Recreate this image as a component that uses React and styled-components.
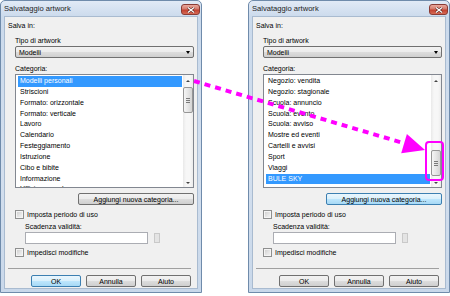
import React from "react";
import styled, { createGlobalStyle, css } from "styled-components";

const GlobalStyle = createGlobalStyle`
  * { box-sizing: border-box; }
  body {
    margin: 0;
    background: #fff;
    font-family: "Liberation Sans", Arial, sans-serif;
    font-size: 7px;
    color: #000;
  }
`;

const Page = styled.div`
  position: relative;
  display: flex;
  gap: 46px;
  width: 450px;
  height: 296px;
  overflow: hidden;
`;

const Window = styled.div`
  display: flex;
  flex-direction: column;
  width: 202px;
  height: 293px;
  padding: 0 3px 3px;
  border: 1px solid #6f8bab;
  border-radius: 5px 5px 0 0;
  background: linear-gradient(#e1eaf6, #cbdaec 16px, #d3dfee 60%, #c9d8ea);
`;

const TitleBar = styled.div`
  display: flex;
  align-items: center;
  justify-content: space-between;
  height: 15px;
  margin-right: -2px;
  font-size: 7.6px;
  color: #1e1e1e;
`;

const CloseButton = styled.div`
  display: flex;
  align-items: center;
  justify-content: center;
  width: 19px;
  height: 11px;
  margin-top: 2px;
  border: 1px solid #8a3b34;
  border-radius: 3px;
  background: linear-gradient(#e9a99d, #d47a6c 45%, #c2402f 55%, #d66a55);
`;

const Client = styled.div`
  display: flex;
  flex-direction: column;
  flex: 1;
  padding: 3px 3px 0;
  border: 1px solid #a9bbd0;
  background: #f0f0f0;
`;

const Label = styled.div`
  height: 11px;
  line-height: 11px;
  white-space: nowrap;
  margin-top: ${(p) => p.$mt || 0}px;
  padding-left: ${(p) => p.$indent || 0}px;
`;

const Group = styled.div`
  display: flex;
  flex-direction: column;
  padding-left: 7px;
`;

const buttonFace = css`
  border: 1px solid #707070;
  border-radius: 2px;
  background: linear-gradient(#f2f2f2, #ebebeb 50%, #dddddd 50%, #cfcfcf);
`;

const focusFace = css`
  border: 1px solid #3c7fb1;
  border-radius: 2px;
  background: linear-gradient(#eaf6fd, #d9f0fc 50%, #bee6fd 50%, #a7d9f5);
`;

const Combo = styled.div`
  ${buttonFace}
  display: flex;
  align-items: center;
  justify-content: space-between;
  height: 12px;
  padding: 0 3px;
`;

const DownGlyph = styled.span`
  width: 0;
  height: 0;
  border-left: 2.5px solid transparent;
  border-right: 2.5px solid transparent;
  border-top: 3px solid #000;
`;

const List = styled.div`
  display: flex;
  height: 114px;
  border: 1px solid #828790;
  background: #fff;
  overflow: hidden;
`;

const Items = styled.div`
  flex: 1;
  padding: 1px 1px 0 2px;
  overflow: hidden;
`;

const Item = styled.div`
  height: 10.85px;
  line-height: 10.85px;
  padding-left: 2px;
  white-space: nowrap;
  background: ${(p) => (p.$selected ? "#3399ff" : "transparent")};
  color: ${(p) => (p.$selected ? "#fff" : "#000")};
`;

const ScrollBar = styled.div`
  display: flex;
  flex-direction: column;
  width: 10px;
  background: linear-gradient(90deg, #e9e9e9, #f7f7f7 30%, #f7f7f7 70%, #ececec);
`;

const ArrowBox = styled.div`
  display: flex;
  justify-content: center;
  align-items: ${(p) => (p.$down ? "flex-end" : "center")};
  height: 11px;
  padding-bottom: ${(p) => (p.$down ? 3 : 0)}px;
`;

const Tri = styled.span`
  width: 0;
  height: 0;
  border-left: 2px solid transparent;
  border-right: 2px solid transparent;
  ${(p) =>
    p.$down
      ? "border-top: 2.5px solid #444;"
      : "border-bottom: 2.5px solid #444;"}
`;

const Track = styled.div`
  flex: 1;
`;

const Thumb = styled.div`
  display: flex;
  flex-direction: column;
  align-items: center;
  justify-content: center;
  gap: 1px;
  height: 26px;
  border: 1px solid #969696;
  border-radius: 2px;
  background: linear-gradient(90deg, #f5f5f5, #e6e6e6 50%, #d4d4d4);
`;

const Grip = styled.span`
  width: 4px;
  height: 1px;
  background: #7a7a7a;
`;

const Row = styled.div`
  display: flex;
  align-items: center;
  gap: ${(p) => p.$gap || 0}px;
  justify-content: ${(p) => p.$justify || "flex-start"};
  margin-top: ${(p) => p.$mt || 0}px;
  padding-left: ${(p) => p.$indent || 0}px;
  padding-right: ${(p) => p.$right || 0}px;
  height: ${(p) => p.$h || 11}px;
`;

const Button = styled.div`
  ${(p) => (p.$focus ? focusFace : buttonFace)}
  display: flex;
  align-items: center;
  justify-content: center;
  width: ${(p) => p.$w}px;
  height: 12px;
  white-space: nowrap;
`;

const CheckBox = styled.span`
  width: 9px;
  height: 9px;
  border: 1px solid #8e8f8f;
  background: linear-gradient(135deg, #cbcbcb, #e7e7e7 60%, #f4f4f4);
  box-shadow: inset 0 0 0 1px #f4f4f4;
`;

const TextBox = styled.div`
  width: 123px;
  height: 12px;
  border: 1px solid #abadb3;
  background: #fff;
`;

const Spin = styled.div`
  width: 6px;
  height: 10px;
  border: 1px solid #c9c9c9;
  background: #e4e4e4;
`;

const Separator = styled.div`
  height: 1px;
  margin: 10px 3px 0 0;
  background: #a0a0a0;
`;

const Overlay = styled.svg`
  position: absolute;
  top: 0;
  left: 0;
  pointer-events: none;
`;

const leftItems = [
  "Modelli personali",
  "Striscioni",
  "Formato: orizzontale",
  "Formato: verticale",
  "Lavoro",
  "Calendario",
  "Festeggiamento",
  "Istruzione",
  "Cibo e bibite",
  "Informazione",
  "Ufficio e scuola",
];

const rightItems = [
  "Negozio: vendita",
  "Negozio: stagionale",
  "Scuola: annuncio",
  "Scuola: evento",
  "Scuola: avviso",
  "Mostre ed eventi",
  "Cartelli e avvisi",
  "Sport",
  "Viaggi",
  "BULE SKY",
];

function Dialog({ items, selected, thumbOffset, addFocus, okFocus }) {
  return (
    <Window>
      <TitleBar>
        <span>Salvataggio artwork</span>
        <CloseButton>
          <svg width="8" height="6" viewBox="0 0 8 6">
            <path d="M1 0.5 L7 5.5 M7 0.5 L1 5.5" stroke="#5a2520" strokeWidth="2.4" />
            <path d="M1 0.5 L7 5.5 M7 0.5 L1 5.5" stroke="#fff" strokeWidth="1.3" />
          </svg>
        </CloseButton>
      </TitleBar>
      <Client>
        <Label>Salva in:</Label>
        <Group>
          <Label $mt={4}>Tipo di artwork</Label>
          <Combo>
            <span>Modelli</span>
            <DownGlyph />
          </Combo>
          <Label $mt={5}>Categoria:</Label>
          <List>
            <Items>
              {items.map((it, i) => (
                <Item key={it} $selected={i === selected}>
                  {it}
                </Item>
              ))}
            </Items>
            <ScrollBar>
              <ArrowBox>
                <Tri />
              </ArrowBox>
              <Track>
                <Thumb style={{ marginTop: thumbOffset }}>
                  <Grip />
                  <Grip />
                  <Grip />
                </Thumb>
              </Track>
              <ArrowBox $down>
                <Tri $down />
              </ArrowBox>
            </ScrollBar>
          </List>
          <Row $justify="flex-end" $mt={5} $h={12}>
            <Button $w={116} $focus={addFocus}>
              Aggiungi nuova categoria...
            </Button>
          </Row>
          <Row $mt={4} $gap={3}>
            <CheckBox />
            <span>Imposta periodo di uso</span>
          </Row>
          <Label $mt={1} $indent={10}>
            Scadenza validità:
          </Label>
          <Row $indent={10} $gap={6} $h={12}>
            <TextBox />
            <Spin />
          </Row>
          <Row $mt={3} $gap={3}>
            <CheckBox />
            <span>Impedisci modifiche</span>
          </Row>
        </Group>
        <Separator />
        <Row $justify="flex-end" $gap={5} $mt={6} $h={12} $right={3}>
          <Button $w={50} $focus={okFocus}>
            OK
          </Button>
          <Button $w={50}>Annulla</Button>
          <Button $w={50}>Aiuto</Button>
        </Row>
      </Client>
    </Window>
  );
}

export default function App() {
  return (
    <>
      <GlobalStyle />
      <Page>
        <Dialog items={leftItems} selected={0} thumbOffset={1} okFocus />
        <Dialog items={rightItems} selected={9} thumbOffset={64} addFocus />
        <Overlay width="450" height="296" viewBox="0 0 450 296">
          <line
            x1="194"
            y1="81"
            x2="405"
            y2="143.5"
            stroke="#ff00ff"
            strokeWidth="4"
            strokeDasharray="6 5"
          />
          <polygon points="425,150 401.2,153.3 406.9,134.1" fill="#ff00ff" />
          <rect
            x="426"
            y="142"
            width="17"
            height="38"
            rx="3"
            fill="none"
            stroke="#ff00ff"
            strokeWidth="2"
          />
        </Overlay>
      </Page>
    </>
  );
}
